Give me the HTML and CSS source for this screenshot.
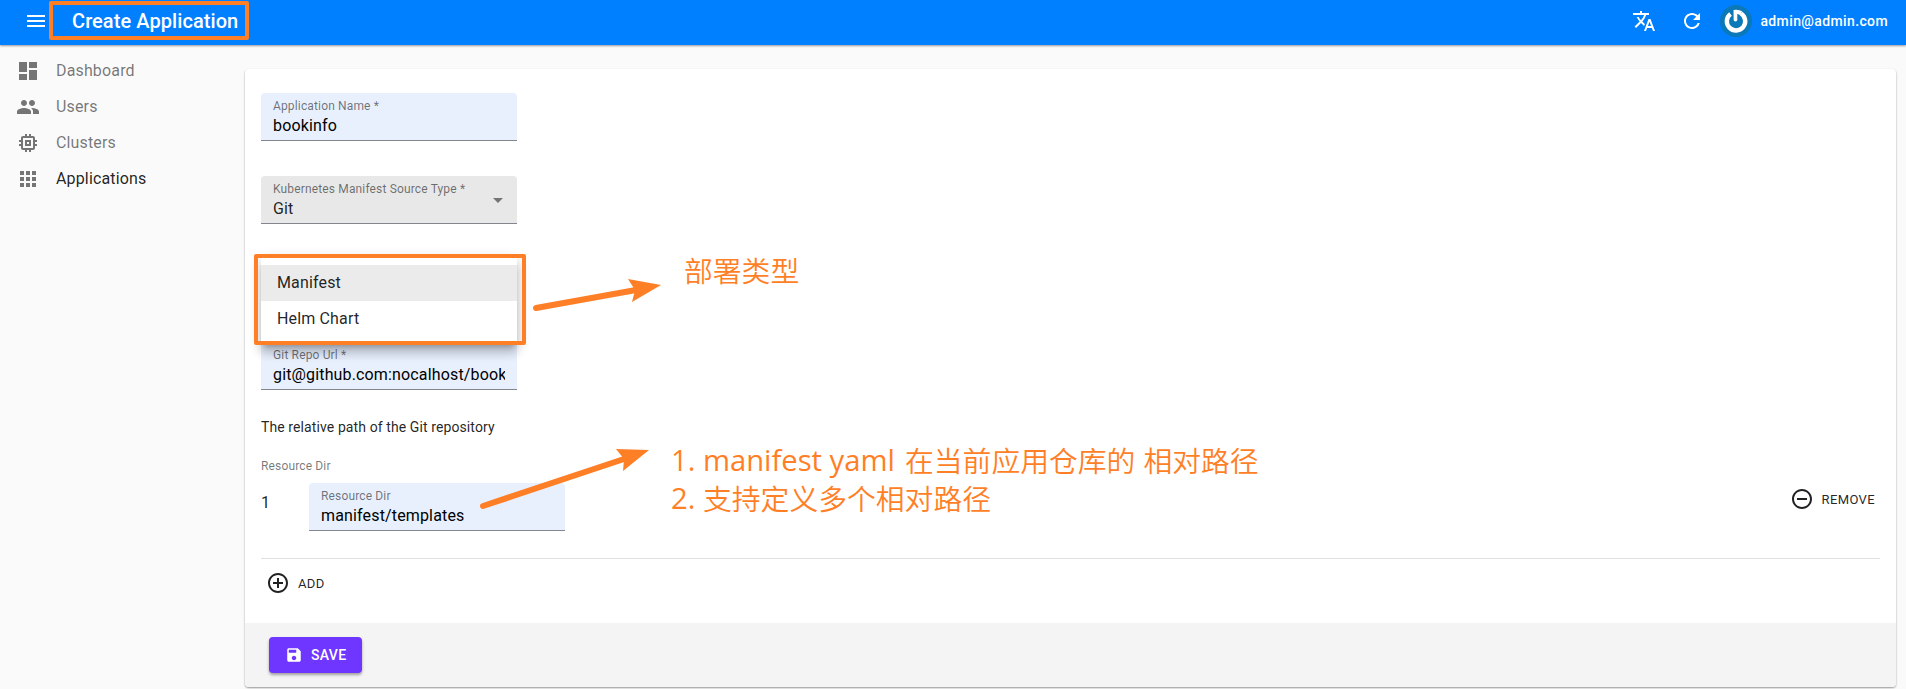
FILE: index.html
```html
<!DOCTYPE html>
<html lang="en">
<head>
<meta charset="utf-8">
<title>Create Application</title>
<link rel="stylesheet" href="styles.css">
</head>
<body>
<header class="appbar">
  <svg class="icon" viewBox="0 0 24 24"><path d="M3 18h18v-2H3v2zm0-5h18v-2H3v2zm0-7v2h18V6H3z"/></svg>
  <h1 class="title">Create Application</h1>
  <svg class="icon translate" viewBox="0 0 24 24"><path d="M12.87 15.07l-2.54-2.51.03-.03c1.74-1.94 2.98-4.17 3.71-6.53H17V4h-7V2H8v2H1v1.99h11.17C11.5 7.92 10.44 9.75 9 11.35 8.07 10.32 7.3 9.19 6.69 8h-2c.73 1.63 1.73 3.17 2.98 4.56l-5.09 5.02L4 19l5-5 3.11 3.11.76-2.04zM18.5 10h-2L12 22h2l1.12-3h4.75L21 22h2l-4.500-12zm-2.620 7l1.620-4.330L19.120 17h-3.240z"/></svg>
  <svg class="icon refresh" viewBox="0 0 24 24"><path d="M17.650 6.350C16.200 4.900 14.210 4 12 4c-4.420 0-7.990 3.580-7.990 8s3.570 8 7.990 8c3.730 0 6.840-2.550 7.730-6h-2.080c-.82 2.330-3.040 4-5.650 4-3.310 0-6-2.690-6-6s2.690-6 6-6c1.660 0 3.140.69 4.220 1.780L13 11h7V4l-2.350 2.350z"/></svg>
  <svg class="avatar" viewBox="0 0 32 32"><circle cx="16" cy="16" r="16" fill="#0b78b7"/><path d="M10.500 8.900A9.200 9.200 0 1 0 21 8.500" fill="none" stroke="#fff" stroke-width="4.400"/><path d="M13.500 5Q18.300 4 22.200 6.300L20.200 10.200L17.300 8.800V15.200Q15.500 17.600 13.700 15.200Z" fill="#fff"/></svg>
  <span class="email">admin@admin.com</span>
</header>
<div class="layout">
  <nav class="sidebar">
    <a class="item"><svg class="icon" viewBox="0 0 24 24"><path d="M3 13h8V3H3v10zm0 8h8v-6H3v6zm10 0h8V11h-8v10zm0-18v6h8V3h-8z"/></svg>Dashboard</a>
    <a class="item"><svg class="icon" viewBox="0 0 24 24"><path d="M16 11c1.660 0 2.990-1.340 2.990-3S17.660 5 16 5c-1.660 0-3 1.340-3 3s1.340 3 3 3zm-8 0c1.660 0 2.990-1.340 2.990-3S9.660 5 8 5C6.340 5 5 6.340 5 8s1.340 3 3 3zm0 2c-2.330 0-7 1.170-7 3.500V19h14v-2.500c0-2.330-4.670-3.500-7-3.500zm8 0c-.29 0-.62.020-.97.050 1.160.84 1.970 1.970 1.970 3.450V19h6v-2.500c0-2.330-4.670-3.500-7-3.500z"/></svg>Users</a>
    <a class="item"><svg class="icon" viewBox="0 0 24 24"><path d="M15 9H9v6h6V9zm-2 4h-2v-2h2v2zm8-2V9h-2V7c0-1.100-.9-2-2-2h-2V3h-2v2h-2V3H9v2H7c-1.100 0-2 .9-2 2v2H3v2h2v2H3v2h2v2c0 1.100.9 2 2 2h2v2h2v-2h2v2h2v-2h2c1.100 0 2-.9 2-2v-2h2v-2h-2v-2h2zm-4 6H7V7h10v10z"/></svg>Clusters</a>
    <a class="item active"><svg class="icon" viewBox="0 0 24 24"><path d="M4 8h4V4H4v4zm6 12h4v-4h-4v4zm-6 0h4v-4H4v4zm0-6h4v-4H4v4zm6 0h4v-4h-4v4zm6-10v4h4V4h-4zm-6 4h4V4h-4v4zm6 6h4v-4h-4v4zm0 6h4v-4h-4v4z"/></svg>Applications</a>
  </nav>
  <main class="card">
    <div class="content">
      <div class="field"><label>Application Name *</label><div class="value">bookinfo</div></div>
      <div class="field select"><label>Kubernetes Manifest Source Type *</label><div class="value">Git</div>
        <svg class="icon arrow" viewBox="0 0 24 24"><path d="M7 10l5 5 5-5z"/></svg></div>
      <div class="type-slot">
        <div class="menu"><div class="option selected">Manifest</div><div class="option">Helm Chart</div></div>
      </div>
      <div class="field repo"><label>Git Repo Url *</label><div class="value">git@github.com:nocalhost/book</div></div>
      <p class="hint">The relative path of the Git repository</p>
      <p class="group-label">Resource Dir</p>
      <div class="row">
        <span class="index">1</span>
        <div class="field"><label>Resource Dir</label><div class="value">manifest/templates</div></div>
        <button class="text-button remove"><svg class="icon" viewBox="0 0 24 24"><path d="M7 11v2h10v-2H7zm5-9C6.480 2 2 6.480 2 12s4.480 10 10 10 10-4.480 10-10S17.520 2 12 2zm0 18c-4.410 0-8-3.590-8-8s3.590-8 8-8 8 3.590 8 8-3.590 8-8 8z"/></svg>REMOVE</button>
      </div>
      <button class="text-button add"><svg class="icon" viewBox="0 0 24 24"><path d="M13 7h-2v4H7v2h4v4h2v-4h4v-2h-4V7zm-1-5C6.480 2 2 6.480 2 12s4.480 10 10 10 10-4.480 10-10S17.520 2 12 2zm0 18c-4.410 0-8-3.590-8-8s3.590-8 8-8 8 3.590 8 8-3.590 8-8 8z"/></svg>ADD</button>
    </div>
    <footer class="toolbar">
      <button class="save"><svg class="icon" viewBox="0 0 24 24"><path d="M17 3H5c-1.110 0-2 .9-2 2v14c0 1.100.89 2 2 2h14c1.100 0 2-.9 2-2V7l-4-4zm-5 16c-1.660 0-3-1.340-3-3s1.340-3 3-3 3 1.340 3 3-1.340 3-3 3zm3-10H5V5h10v4z"/></svg>SAVE</button>
    </footer>
  </main>
</div>
<div class="mark mark-title"></div>
<div class="mark mark-menu"></div>
<svg class="arrows" viewBox="0 0 1906 689">
  <path d="M536 308L636 290M483 506L624 459" stroke-width="6" stroke-linecap="round"/>
  <path class="head" d="M661 285L628 279L635 290L632 302Z M649 450L616 449L624 459L623 471Z"/>
</svg>
<div class="note note-type"><span class="cjk">部署类型</span></div>
<div class="note note-path">
  <div><span class="latin">1. manifest yaml</span><span class="cjk">在当前应用仓库的</span><span class="cjk gap">相对路径</span></div>
  <div><span class="latin num">2.</span><span class="cjk">支持定义多个相对路径</span></div>
</div>
</body>
</html>
```
FILE: styles.css
```css
* { box-sizing: border-box; }
body {
  margin: 0;
  height: 689px;
  overflow: hidden;
  background: #fafafa;
  color: rgba(0, 0, 0, .87);
  font: 400 16px/24px Roboto, sans-serif;
  letter-spacing: .15px;
}
p, h1 { margin: 0; font-weight: 400; }
button { border: 0; background: none; font-family: inherit; color: inherit; }
.icon { width: 24px; height: 24px; flex: none; fill: currentColor; }

.appbar {
  height: 45px;
  padding: 0 18px 3px 24px;
  display: flex;
  align-items: center;
  background: #007fff;
  color: #fff;
  box-shadow: 0 1px 2px rgba(0, 0, 0, .4);
}
.title { margin-left: 24px; flex: 1; font-size: 20px; font-weight: 500; letter-spacing: .07px; }
.refresh { margin-left: 24px; }
.avatar { width: 32px; height: 32px; margin: 0 8px 0 16px; }
.email { font-size: 14px; font-weight: 500; letter-spacing: .38px; }

.layout { display: flex; padding-right: 10px; }
.sidebar { width: 245px; padding-top: 8px; flex: none; }
.item {
  height: 36px;
  padding-left: 16px;
  display: flex;
  align-items: center;
  gap: 16px;
  color: rgba(0, 0, 0, .54);
}
.item.active { color: rgba(0, 0, 0, .87); }
.item .icon { color: #757575; }

.card {
  flex: 1;
  height: 618px;
  margin-top: 24px;
  display: flex;
  flex-direction: column;
  background: #fff;
  border-radius: 4px;
  overflow: hidden;
  box-shadow: 0 1px 2px rgba(0, 0, 0, .4);
}
.content { flex: 1; padding: 24px 16px 0; }
.field {
  width: 256px;
  height: 48px;
  padding: 5px 12px 0;
  background: #e8f0fe;
  border-bottom: 1px solid #83868e;
  border-radius: 4px 4px 0 0;
}
.field label { display: block; height: 16px; font-size: 12px; line-height: 16px; color: rgba(0, 0, 0, .54); }
.value { height: 24px; line-height: 24px; overflow: hidden; white-space: nowrap; color: #000; }
.select { position: relative; margin-top: 35px; background: #e8e8e8; }
.select .value { color: rgba(0, 0, 0, .87); }
.arrow { position: absolute; right: 7px; top: 12px; color: #757575; }
.type-slot { position: relative; height: 118px; }
.menu {
  position: absolute;
  top: 33px;
  left: 0;
  width: 256px;
  padding: 8px 0;
  background: #fff;
  border-radius: 4px;
  box-shadow: 0 5px 5px -3px rgba(0, 0, 0, .2), 0 8px 10px 1px rgba(0, 0, 0, .14), 0 3px 14px 2px rgba(0, 0, 0, .12);
}
.option { height: 36px; padding: 0 16px; line-height: 36px; }
.selected { background: #ebebeb; }
.hint { margin-top: 27px; font-size: 14px; line-height: 20px; letter-spacing: .1px; }
.group-label { margin-top: 20px; font-size: 12px; line-height: 18px; color: rgba(0, 0, 0, .54); }
.row { height: 84px; padding-top: 8px; display: flex; border-bottom: 1px solid #e0e0e0; }
.index { width: 48px; padding-top: 8px; }
.text-button { display: flex; align-items: center; height: 30px; padding: 0 5px; gap: 8px; font-size: 13px; letter-spacing: .37px; }
.remove { margin-left: auto; margin-top: 1px; }
.add { margin-top: 9px; }
.toolbar { height: 64px; padding: 14px 24px; background: #f4f4f4; }
.save {
  width: 93px;
  height: 36px;
  padding: 0 16px;
  display: flex;
  align-items: center;
  gap: 8px;
  border-radius: 4px;
  background: #6f36ff;
  color: #fff;
  font-size: 14px;
  font-weight: 500;
  letter-spacing: .3px;
  box-shadow: 0 2px 3px rgba(0, 0, 0, .35);
}
.save .icon { width: 18px; height: 18px; }

/* Annotations drawn over the page */
.mark { position: absolute; border: 4px solid #ff7f27; border-radius: 2px; }
.mark-title { left: 49px; top: 1px; width: 200px; height: 39px; }
.mark-menu { left: 254px; top: 254px; width: 272px; height: 91px; }
.arrows { position: absolute; left: 0; top: 0; width: 1906px; height: 689px; stroke: #ff7f27; fill: none; }
.arrows .head { fill: #ff7f27; stroke: none; }
.note { position: absolute; color: #ff7f27; line-height: 38px; letter-spacing: 0; white-space: nowrap; }
.note > div { display: flex; height: 38px; }
.note-type { left: 684px; top: 251px; }
.note-path { left: 671px; top: 441px; }
.cjk { font-family: "Noto Sans CJK SC", sans-serif; font-size: 28.800px; font-weight: 350; }
.gap { margin-left: 8px; }
.latin { width: 234px; font-family: "Open Sans", "Noto Sans", sans-serif; font-size: 29.200px; }
.num { width: 32px; }
```
